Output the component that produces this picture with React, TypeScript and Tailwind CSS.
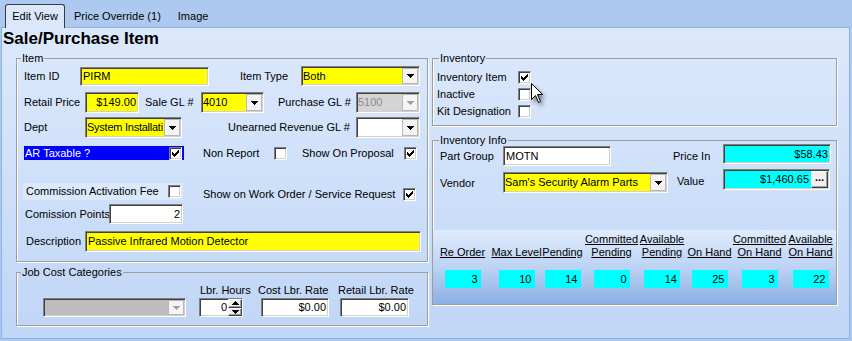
import React from "react";

const sunken =
  "border border-t-[#808080] border-l-[#808080] border-r-white border-b-white shadow-[inset_1px_1px_0_#404040,inset_-1px_-1px_0_#d4d0c8]";
const raised =
  "border border-t-white border-l-white border-r-[#404040] border-b-[#404040] shadow-[inset_-1px_-1px_0_#a0a0a0]";

function CheckMark() {
  return (
    <svg width="7" height="7" viewBox="0 0 7 7" shapeRendering="crispEdges">
      <path
        d="M6 0h1v1h-1z M5 1h2v1h-2z M0 2h1v1h-1z M4 2h3v1h-3z M0 3h2v1h-2z M3 3h3v1h-3z M0 4h5v1h-5z M1 5h3v1h-3z M2 6h1v1h-1z"
        fill="#000"
      />
    </svg>
  );
}

function Check({ checked = false }: { checked?: boolean }) {
  return (
    <div className={`w-[13px] h-[13px] shrink-0 bg-white flex items-center justify-center ${sunken}`}>
      {checked && <CheckMark />}
    </div>
  );
}

function Arrow({ up = false, color = "#000" }: { up?: boolean; color?: string }) {
  return (
    <svg width="7" height="4" viewBox="0 0 7 4" shapeRendering="crispEdges">
      <path
        d={up ? "M3 0h1v1h-1z M2 1h3v1h-3z M1 2h5v1h-5z M0 3h7v1h-7z" : "M0 0h7v1h-7z M1 1h5v1h-5z M2 2h3v1h-3z M3 3h1v1h-1z"}
        fill={color}
      />
    </svg>
  );
}

function Field({
  className = "",
  right = false,
  children,
}: {
  className?: string;
  right?: boolean;
  children?: React.ReactNode;
}) {
  return (
    <div
      className={`shrink-0 flex items-center whitespace-nowrap overflow-hidden ${
        right ? "justify-end pr-[2px]" : "pl-[2px]"
      } ${sunken} ${className}`}
    >
      {children}
    </div>
  );
}

function Select({
  className = "",
  textClass = "",
  value,
  disabled = false,
}: {
  className?: string;
  textClass?: string;
  value: string;
  disabled?: boolean;
}) {
  return (
    <div className={`shrink-0 flex items-stretch ${sunken} ${className}`}>
      <div
        className={`flex-1 flex items-center overflow-hidden whitespace-nowrap pl-[1px] ${textClass} ${
          disabled ? "text-[#8c8c8c]" : ""
        }`}
      >
        {value}
      </div>
      <div className="w-[16px] my-[1px] mr-[1px] bg-[#f4f4f4] border border-[#b8b8b8] flex items-center justify-center">
        <Arrow color={disabled ? "#a0a0a0" : "#000"} />
      </div>
    </div>
  );
}

function Group({
  title,
  legend = "ml-[4px]",
  className = "",
  children,
}: {
  title: string;
  legend?: string;
  className?: string;
  children: React.ReactNode;
}) {
  return (
    <fieldset
      className={`border border-[#9d9d9d] shadow-[inset_1px_0_0_#fff,1px_1px_0_#fff] ${className}`}
    >
      <legend className={`${legend} px-[1px] leading-[13px]`}>{title}</legend>
      {children}
    </fieldset>
  );
}

const stock = [
  { cls: "ml-[7px] w-[45px]", lines: ["Re Order"], v: "3" },
  { cls: "ml-[7px] w-[49px]", lines: ["Max Level"], v: "10" },
  { cls: "ml-[2px] w-[39px]", lines: ["Pending"], v: "14" },
  { cls: "ml-[5px] w-[49px]", lines: ["Committed", "Pending"], v: "0" },
  { cls: "ml-[4px] w-[44px]", lines: ["Available", "Pending"], v: "14" },
  { cls: "ml-[4px] w-[43px]", lines: ["On Hand"], v: "25" },
  { cls: "ml-[4px] w-[49px]", lines: ["Committed", "On Hand"], v: "3" },
  { cls: "ml-[5px] w-[43px]", lines: ["Available", "On Hand"], v: "22" },
];

export default function App() {
  return (
    <div className="relative w-[852px] h-[341px] overflow-hidden bg-[#adc9f0] text-[11px] leading-[13px] text-black font-['Liberation_Sans',Arial,sans-serif]">
      {/* tabs */}
      <div className="relative z-10 flex items-end h-[27px] pl-[5px]">
        <div className="h-[24px] w-[60px] mb-[-1px] border border-b-0 border-[#3a3a3a] rounded-t-[3px] bg-[#dbe8fb] flex items-center justify-center">
          Edit View
        </div>
        <div className="h-[24px] mb-[-1px] ml-[9px] flex items-center">Price Override (1)</div>
        <div className="h-[24px] mb-[-1px] ml-[17px] flex items-center">Image</div>
      </div>

      {/* panel */}
      <div className="ml-[1px] w-[849px] h-[312px] border border-[#8cb2e6] bg-linear-to-b from-[#dce9fc] to-[#c0d6f6]">
        <div className="pt-[1px] pl-[1px] h-[21px] leading-[20px] text-[17px] font-bold">Sale/Purchase Item</div>

        <div className="flex mt-[3px]">
          {/* left column */}
          <div className="ml-[14px] w-[412px] shrink-0">
            <Group title="Item" className="pb-[9px]">
              <div className="flex items-center h-[20px] mt-[1px] whitespace-nowrap">
                <span className="ml-[7px] w-[56px] shrink-0">Item ID</span>
                <Field className="w-[129px] h-[19px] bg-[#ffff00]">PIRM</Field>
                <span className="ml-[31px] w-[61px] shrink-0">Item Type</span>
                <Select className="w-[119px] h-[20px] bg-[#ffff00]" value="Both" />
              </div>

              <div className="flex items-center h-[21px] mt-[6px] whitespace-nowrap">
                <span className="ml-[7px] w-[61px] shrink-0">Retail Price</span>
                <Field right className="w-[54px] h-[21px] bg-[#ffff00]">$149.00</Field>
                <span className="ml-[6px] w-[56px] shrink-0">Sale GL #</span>
                <Select className="w-[63px] h-[21px] bg-[#ffff00]" value="4010" />
                <span className="ml-[14px] w-[78px] shrink-0">Purchase GL #</span>
                <Select disabled className="w-[64px] h-[21px] bg-[#d4d4d4]" value="5100" />
              </div>

              <div className="flex items-center h-[21px] mt-[4px] whitespace-nowrap">
                <span className="ml-[7px] w-[61px] shrink-0">Dept</span>
                <Select
                  className="w-[97px] h-[21px] bg-[#ffff00]"
                  textClass="tracking-[-0.25px]"
                  value="System Installati"
                />
                <span className="ml-[46px] w-[128px] shrink-0">Unearned Revenue GL #</span>
                <Select className="w-[64px] h-[21px] bg-white" value="" />
              </div>

              <div className="flex items-center h-[14px] mt-[8px] whitespace-nowrap">
                <div className="ml-[7px] w-[160px] h-[14px] bg-[#0000ff] text-white flex items-center justify-between pl-[1px] pr-[2px] shrink-0">
                  <span>AR Taxable ?</span>
                  <Check checked />
                </div>
                <span className="ml-[19px] w-[71px] shrink-0">Non Report</span>
                <Check />
                <span className="ml-[15px] w-[102px] shrink-0">Show On Proposal</span>
                <Check checked />
              </div>

              <div className="flex items-start h-[17px] mt-[23px] whitespace-nowrap">
                <div className="ml-[6px] w-[160px] h-[17px] bg-[#dce9fc] flex items-center justify-between pl-[3px] pr-[2px] shrink-0">
                  <span>Commission Activation Fee</span>
                  <Check />
                </div>
                <div className="flex items-center h-[17px] mt-[3px]">
                  <span className="ml-[20px] w-[200px] shrink-0">Show on Work Order / Service Request</span>
                  <Check checked />
                </div>
              </div>

              <div className="flex items-center h-[20px] mt-[4px] whitespace-nowrap">
                <span className="ml-[8px] w-[84px] shrink-0">Comission Points</span>
                <Field right className="w-[74px] h-[20px] bg-white">2</Field>
              </div>

              <div className="flex items-center h-[21px] mt-[7px] whitespace-nowrap">
                <span className="ml-[9px] w-[59px] shrink-0">Description</span>
                <Field className="w-[336px] h-[21px] bg-[#ffff00]">Passive Infrared Motion Detector</Field>
              </div>
            </Group>

            <Group title="Job Cost Categories" className="mt-[4px] pb-[8px]">
              <div className="flex h-[13px] mt-[5px] whitespace-nowrap">
                <span className="ml-[183px] w-[58px] shrink-0">Lbr. Hours</span>
                <span className="w-[80px] shrink-0">Cost Lbr. Rate</span>
                <span>Retail Lbr. Rate</span>
              </div>
              <div className="flex h-[19px] mt-[1px]">
                <Select disabled className="ml-[26px] w-[143px] h-[19px] bg-[#bdbdbd]" value="" />
                <div className={`ml-[13px] w-[44px] h-[19px] shrink-0 flex bg-white ${sunken}`}>
                  <div className="flex-1 flex items-center justify-end pr-[1px]">0</div>
                  <div className="w-[14px] flex flex-col">
                    <div className={`flex-1 bg-[#f0f0f0] flex items-center justify-center ${raised}`}>
                      <Arrow up />
                    </div>
                    <div className={`flex-1 bg-[#f0f0f0] flex items-center justify-center ${raised}`}>
                      <Arrow />
                    </div>
                  </div>
                </div>
                <Field right className="ml-[18px] w-[68px] h-[19px] bg-white">$0.00</Field>
                <Field right className="ml-[11px] w-[69px] h-[19px] bg-white">$0.00</Field>
              </div>
            </Group>
          </div>

          {/* right column */}
          <div className="ml-[4px] w-[405px] shrink-0">
            <Group title="Inventory" legend="ml-[6px]" className="pb-[5px]">
              <div className="mt-[4px]">
                {(
                  [
                    ["Inventory Item", true],
                    ["Inactive", false],
                    ["Kit Designation", false],
                  ] as [string, boolean][]
                ).map(([label, checked]) => (
                  <div key={label} className="flex items-center h-[17px]">
                    <span className="ml-[4px] w-[81px] shrink-0 whitespace-nowrap">{label}</span>
                    <Check checked={checked} />
                  </div>
                ))}
              </div>
            </Group>

            <Group title="Inventory Info" legend="ml-[6px]" className="mt-[8px]">
              <div className="flex h-[22px] -mt-[3px] whitespace-nowrap">
                <span className="ml-[7px] w-[63px] shrink-0 self-center pt-[3px]">Part Group</span>
                <Field className="w-[108px] h-[20px] bg-white self-end">MOTN</Field>
                <span className="ml-[62px] w-[50px] shrink-0 self-center pt-[3px]">Price In</span>
                <Field right className="w-[108px] h-[20px] bg-[#00ffff]">$58.43</Field>
              </div>

              <div className="flex h-[24px] mt-[3px] whitespace-nowrap">
                <span className="ml-[7px] w-[63px] shrink-0 self-center pt-[5px]">Vendor</span>
                <Select className="w-[165px] h-[21px] bg-[#ffff00] self-end" value="Sam's Security Alarm Parts" />
                <span className="ml-[9px] w-[46px] shrink-0 self-center pt-[1px]">Value</span>
                <div className={`w-[107px] h-[21px] shrink-0 flex bg-[#00ffff] ${sunken}`}>
                  <div className="flex-1 flex items-center justify-end pr-[2px]">$1,460.65</div>
                  <div className={`w-[17px] my-[1px] mr-[1px] bg-[#f0f0f0] flex items-start justify-center font-bold leading-[10px] ${raised}`}>
                    ...
                  </div>
                </div>
              </div>

              <div className="mt-[37px] h-[74px] flex pt-[3px] bg-linear-to-b from-[#e1ecfc] via-[#bcd3f4] to-[#8bb0e4]">
                {stock.map((c) => (
                  <div key={c.lines.join("-")} className={`${c.cls} shrink-0 flex flex-col items-center`}>
                    <div className="h-[26px] flex flex-col justify-end items-center whitespace-nowrap">
                      {c.lines.map((l) => (
                        <span key={l} className="underline underline-offset-[1px]">
                          {l}
                        </span>
                      ))}
                    </div>
                    <div className="mt-[11px] w-[36px] h-[18px] bg-[#00ffff] text-right pr-[3px] leading-[18px]">
                      {c.v}
                    </div>
                  </div>
                ))}
              </div>
            </Group>
          </div>
        </div>
      </div>

      {/* mouse pointer */}
      <svg
        className="absolute left-[531px] top-[83px] drop-shadow-[2px_3px_2px_rgba(0,0,0,0.45)]"
        width="13"
        height="21"
        viewBox="0 0 13 21"
      >
        <path d="M0.5 0.5 L0.5 16.5 L4.5 12.5 L7.5 19.5 L9.5 18.5 L6.5 11.5 L11.5 11.5 Z" fill="#fff" stroke="#000" strokeWidth="1" />
      </svg>
    </div>
  );
}
